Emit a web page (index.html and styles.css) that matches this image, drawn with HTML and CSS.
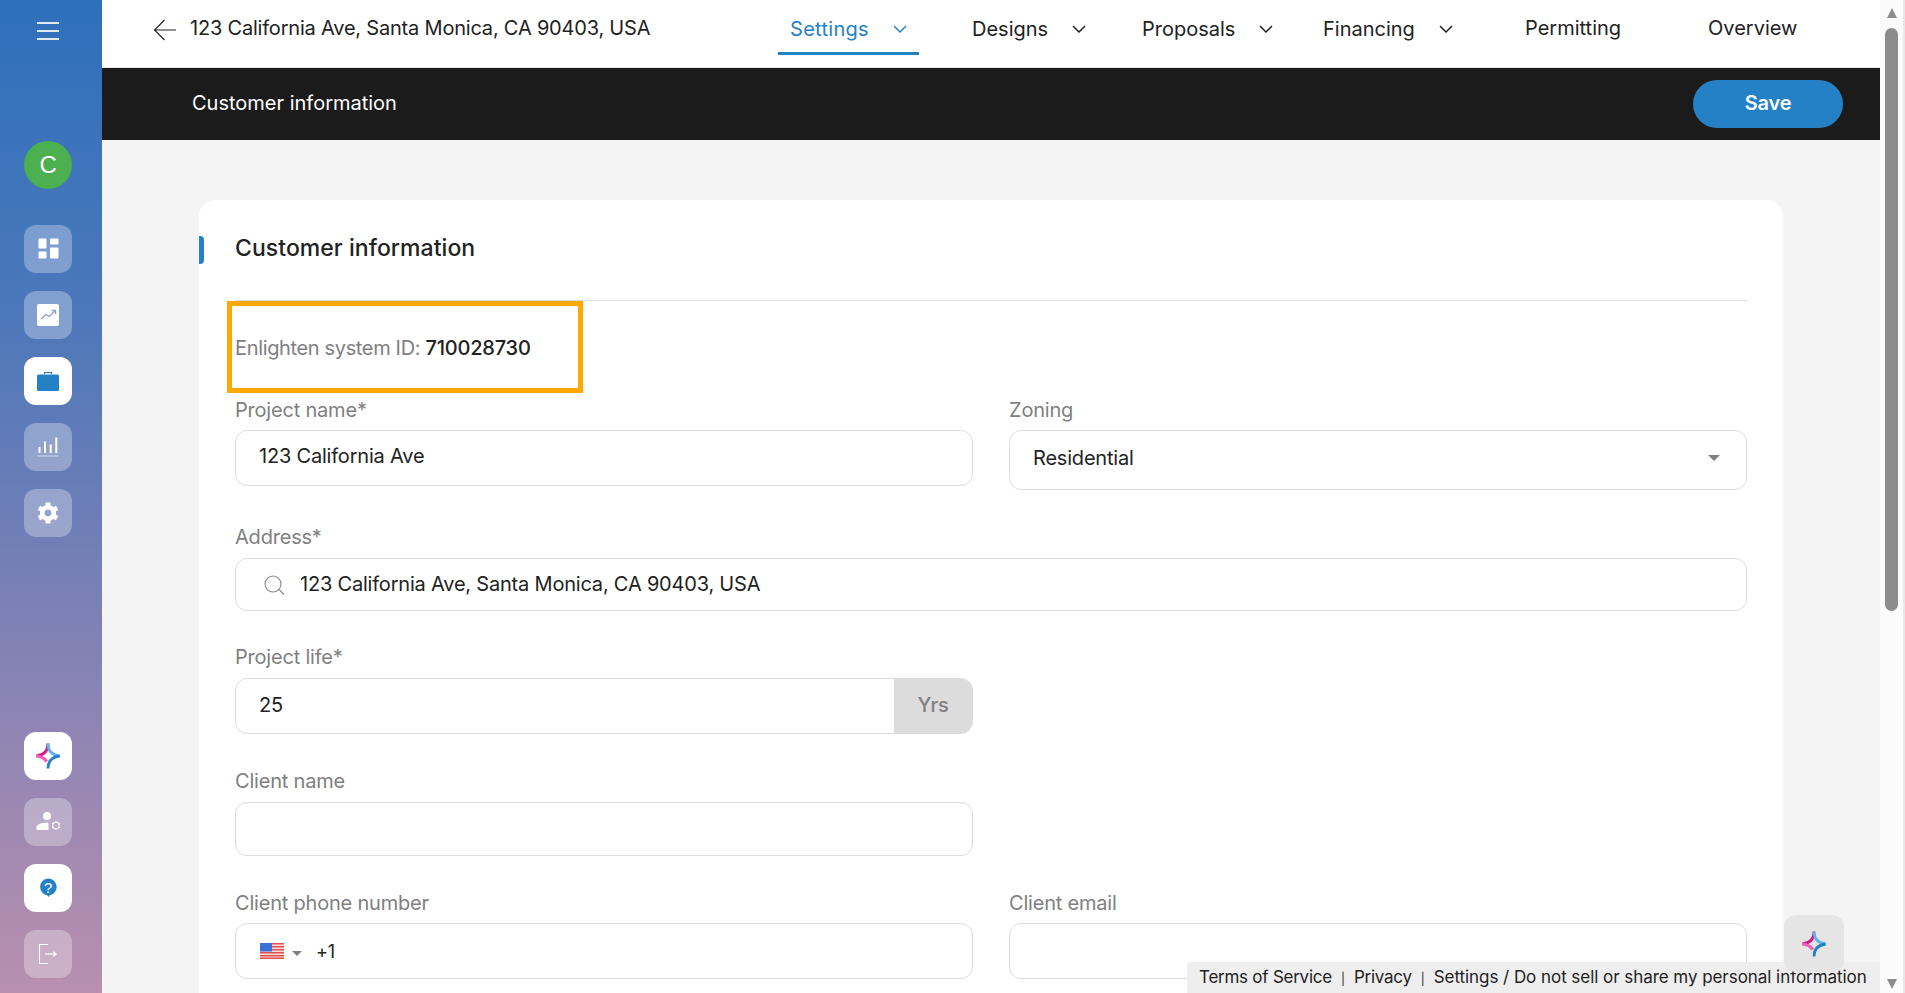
FILE: index.html
```html
<!DOCTYPE html>
<html lang="en">
<head>
    <meta charset="UTF-8">
    <meta name="viewport" content="width=device-width, initial-scale=1.0">
    <title>Customer information</title>
    <link rel="stylesheet" href="styles.css">
</head>
<body>
    <svg class="defs" width="0" height="0">
        <symbol id="spark" viewBox="0 0 28 30">
            <path d="M14 1.5 C14 9 10 14 1.5 15" fill="none" stroke="#d01c8b" stroke-width="3"/>
            <path d="M14 1.5 C14 9 18 14 26.5 15" fill="none" stroke="#5fb4ee" stroke-width="3"/>
            <path d="M1.5 15 C7 15.5 10.5 17.5 12.5 21" fill="none" stroke="#f65cb6" stroke-width="3.5"/>
            <path d="M26.5 15 C18 16 14 21 14 28.5" fill="none" stroke="#2481c6" stroke-width="3"/>
        </symbol>
    </svg>

    <div class="app">
        <!-- Sidebar -->
        <aside class="sidebar">
            <div class="menu-btn"><span></span><span></span><span></span></div>
            <div class="avatar">C</div>

            <div class="tile">
                <svg viewBox="0 0 48 48"><g fill="#fff"><rect x="14.5" y="13.5" width="8" height="10" rx="1"/><rect x="26" y="13.5" width="8.5" height="6" rx="1"/><rect x="14.5" y="26.5" width="8" height="7" rx="1"/><rect x="26" y="22.5" width="8.5" height="11" rx="1"/></g></svg>
            </div>
            <div class="tile">
                <svg viewBox="0 0 48 48"><rect x="13" y="13" width="22" height="22" rx="2" fill="#fff"/><path d="M17 28 L22 23.5 L25 25.5 L31 20 M27.5 19.5 H31.5 V23" fill="none" stroke="#8fa3d0" stroke-width="1.3"/></svg>
            </div>
            <div class="tile active">
                <svg viewBox="0 0 48 48"><path d="M20.5 17 V15.5 H27.5 V17" fill="none" stroke="#2481c6" stroke-width="1.2"/><rect x="13" y="17.5" width="22" height="16.5" rx="1.5" fill="#2481c6"/></svg>
            </div>
            <div class="tile">
                <svg viewBox="0 0 48 48"><g fill="#fff"><rect x="14.5" y="24" width="2" height="6"/><rect x="20" y="18.5" width="2" height="11.5"/><rect x="25.7" y="21.5" width="2" height="8.5"/><rect x="31.3" y="14.5" width="2" height="15.5"/></g><rect x="13.5" y="32.5" width="21" height="1" fill="#fff" opacity="0.6"/></svg>
            </div>
            <div class="tile">
                <svg viewBox="0 0 48 48"><circle cx="24" cy="24" r="5.7" fill="none" stroke="#fff" stroke-width="4.6"/><g fill="#fff"><rect x="21.5" y="13.5" width="5" height="4" rx="0.8"/><rect x="21.5" y="30.5" width="5" height="4" rx="0.8"/><rect x="21.5" y="13.5" width="5" height="4" rx="0.8" transform="rotate(60 24 24)"/><rect x="21.5" y="13.5" width="5" height="4" rx="0.8" transform="rotate(120 24 24)"/><rect x="21.5" y="13.5" width="5" height="4" rx="0.8" transform="rotate(240 24 24)"/><rect x="21.5" y="13.5" width="5" height="4" rx="0.8" transform="rotate(300 24 24)"/></g></svg>
            </div>

            <div class="sidebar-bottom">
                <div class="tile active">
                    <svg viewBox="0 0 48 48"><use href="#spark" x="11" y="10" width="26" height="28"/></svg>
                </div>
                <div class="tile">
                    <svg viewBox="0 0 48 48"><circle cx="23" cy="18" r="4" fill="#fff"/><path d="M12.5 32 V28 C15 25.5 19 24.5 24.5 24.5 V32 Z" fill="#fff"/><circle cx="32" cy="27.5" r="3.2" fill="none" stroke="#fff" stroke-width="1.1"/><path d="M32 22.8 V24.3 M32 30.7 V32.2 M27.8 25.2 L29.2 26 M34.8 29 L36.2 29.8 M27.8 29.8 L29.2 29 M34.8 26 L36.2 25.2" stroke="#fff"/></svg>
                </div>
                <div class="tile active">
                    <svg viewBox="0 0 48 48"><path d="M24 14.5 A8.5 8.5 0 0 1 25.5 31.4 L24.5 33 L23.5 31.4 A8.5 8.5 0 0 1 24 14.5 Z" fill="#2481c6"/><text x="24" y="28.5" class="help-mark">?</text></svg>
                </div>
                <div class="tile">
                    <svg viewBox="0 0 48 48"><path d="M24 14.5 H15.5 V33.5 H24" fill="none" stroke="#fff" stroke-width="1.1"/><path d="M21 24 H30" stroke="#fff" stroke-width="1.2"/><path d="M29.5 21 L33 24 L29.5 27 Z" fill="#fff"/></svg>
                </div>
            </div>
        </aside>

        <main class="main">
            <!-- Top navigation -->
            <header class="topbar">
                <div class="topbar-left">
                    <svg class="back-icon" viewBox="0 0 24 22"><path d="M23 11 H1.5 M11.5 1 L1.5 11 L11.5 21" fill="none" stroke="#222" stroke-width="1.2"/></svg>
                    <span>123 California Ave, Santa Monica, CA 90403, USA</span>
                </div>
                <nav class="nav">
                    <div class="nav-cell"><a class="nav-item current">Settings<svg class="chevron" viewBox="0 0 14 8"><path d="M1 1 L7 7 L13 1"/></svg></a></div>
                    <div class="nav-cell"><a class="nav-item">Designs<svg class="chevron" viewBox="0 0 14 8"><path d="M1 1 L7 7 L13 1"/></svg></a></div>
                    <div class="nav-cell"><a class="nav-item">Proposals<svg class="chevron" viewBox="0 0 14 8"><path d="M1 1 L7 7 L13 1"/></svg></a></div>
                    <div class="nav-cell"><a class="nav-item">Financing<svg class="chevron" viewBox="0 0 14 8"><path d="M1 1 L7 7 L13 1"/></svg></a></div>
                    <div class="nav-cell"><a class="nav-item plain">Permitting</a></div>
                    <div class="nav-cell"><a class="nav-item plain">Overview</a></div>
                </nav>
            </header>

            <div class="titlebar">
                <span>Customer information</span>
                <button class="save-btn">Save</button>
            </div>

            <!-- Form card -->
            <section class="card">
                <h2 class="card-title">Customer information</h2>

                <div class="system-id">
                    <span class="muted">Enlighten system ID:&nbsp;</span><span>710028730</span>
                </div>

                <div class="row after-zoning">
                    <div class="field">
                        <label>Project name*</label>
                        <input class="input input-name" type="text" value="123 California Ave">
                    </div>
                    <div class="field">
                        <label>Zoning</label>
                        <div class="input select">Residential<span class="caret"></span></div>
                    </div>
                </div>

                <div class="row">
                    <div class="field wide">
                        <label>Address*</label>
                        <div class="input address">
                            <svg class="search-icon" viewBox="0 0 23 20"><circle cx="10" cy="9" r="8" fill="none" stroke="#888" stroke-width="1.1"/><path d="M16 14.5 L21 19.5" stroke="#888" stroke-width="1.1"/></svg>
                            123 California Ave, Santa Monica, CA 90403, USA
                        </div>
                    </div>
                </div>

                <div class="row after-life">
                    <div class="field">
                        <label>Project life*</label>
                        <div class="input life">
                            <span class="life-value">25</span>
                            <span class="unit">Yrs</span>
                        </div>
                    </div>
                </div>

                <div class="row after-client">
                    <div class="field">
                        <label>Client name</label>
                        <div class="input client"></div>
                    </div>
                </div>

                <div class="row contact">
                    <div class="field">
                        <label>Client phone number</label>
                        <div class="input phone">
                            <svg class="flag" viewBox="0 0 24 16">
                                <rect width="24" height="16" fill="#f4dcdc"/>
                                <g fill="#e2504f"><rect y="0" width="24" height="1.5"/><rect y="3" width="24" height="1.5"/><rect y="6" width="24" height="1.5"/><rect y="9" width="24" height="1.5"/><rect y="12" width="24" height="1.5"/><rect y="14.5" width="24" height="1.5"/></g>
                                <rect width="12" height="8.5" fill="#3b6fd8"/>
                            </svg>
                            <span class="caret small"></span>
                            <span class="dial">+1</span>
                        </div>
                    </div>
                    <div class="field">
                        <label>Client email</label>
                        <div class="input phone"></div>
                    </div>
                </div>
            </section>

            <div class="legal">
                <span class="legal-short">Terms of Service</span><i>|</i><span class="legal-short">Privacy</span><i>|</i><span>Settings / Do not sell or share my personal information</span>
            </div>
            <div class="assist-btn">
                <svg viewBox="0 0 28 30"><use href="#spark"/></svg>
            </div>
        </main>

        <!-- Page scrollbar -->
        <div class="scrollbar">
            <span class="arrow up"></span>
            <div class="thumb"></div>
            <span class="arrow down"></span>
        </div>
    </div>
</body>
</html>
```

FILE: styles.css
```css
* {
    box-sizing: border-box;
}

body {
    margin: 0;
    padding: 0;
    font-family: Inter, "Noto Sans", sans-serif;
    font-size: 20px;
    letter-spacing: -0.2px;
    color: #222;
    background-color: #f4f4f4;
}

.defs {
    position: absolute;
}

.app {
    display: flex;
    height: 993px;
    overflow: hidden;
}

/* Sidebar */
.sidebar {
    display: flex;
    flex-direction: column;
    align-items: center;
    width: 102px;
    flex-shrink: 0;
    padding-right: 6px;
    padding-bottom: 15px;
    background: linear-gradient(180deg, #2e70bb 0%, #4a77ba 30%, #7a80b6 60%, #b98fae 100%);
}

.menu-btn {
    display: flex;
    flex-direction: column;
    gap: 6px;
    width: 22px;
    margin-top: 22px;
}

.menu-btn span {
    height: 2px;
    background-color: #dfe8f5;
}

.avatar {
    display: flex;
    align-items: center;
    justify-content: center;
    width: 48px;
    height: 48px;
    margin-top: 101px;
    margin-bottom: 36px;
    border-radius: 50%;
    background-color: #4caf50;
    color: #fff;
    font-family: "Liberation Sans", sans-serif;
    font-size: 24px;
}

.tile {
    width: 48px;
    height: 48px;
    margin-bottom: 18px;
    border-radius: 12px;
    background-color: rgba(255, 255, 255, 0.3);
}

.tile svg {
    display: block;
    width: 48px;
    height: 48px;
}

.tile.active {
    background-color: #fff;
}

.sidebar-bottom {
    margin-top: auto;
}

.sidebar-bottom .tile:last-child {
    margin-bottom: 0;
}

.help-mark {
    fill: #fff;
    font-family: "Liberation Sans", sans-serif;
    font-size: 15px;
    text-anchor: middle;
}

/* Main column */
.main {
    position: relative;
    flex: 1;
    min-width: 0;
    overflow: hidden;
}

.topbar {
    display: flex;
    height: 68px;
    background-color: #fff;
    border-bottom: 1px solid #e6e6e6;
}

.topbar-left {
    display: flex;
    align-items: center;
    flex: 1;
    height: 56px;
    padding-left: 51px;
}

.back-icon {
    width: 24px;
    height: 22px;
    margin-top: 4px;
    margin-right: 13px;
}

.nav {
    display: grid;
    grid-template-columns: 182px 170px 181px 202px 183px 184px;
    width: 1102px;
    flex-shrink: 0;
    letter-spacing: 0;
}

.nav-cell {
    display: flex;
}

.nav-item {
    display: flex;
    align-items: center;
    height: 55px;
    padding: 3px 12px 0;
}

.nav-item.plain {
    padding-top: 1px;
}

.nav-item.current {
    padding-top: 6px;
    color: #2481c6;
    letter-spacing: 0.3px;
    border-bottom: 3px solid #2481c6;
}

.chevron {
    width: 14px;
    height: 8px;
    margin-left: 24px;
    fill: none;
    stroke: currentColor;
    stroke-width: 1.5;
}

.titlebar {
    display: flex;
    align-items: center;
    justify-content: space-between;
    height: 72px;
    padding: 0 37px 0 90px;
    background-color: #1b1b1b;
    color: #fff;
    letter-spacing: 0;
}

.titlebar span {
    padding-bottom: 2px;
}

.save-btn {
    width: 150px;
    height: 48px;
    padding-bottom: 3px;
    border: none;
    border-radius: 24px;
    background-color: #2481c6;
    color: #fff;
    font-family: inherit;
    font-size: 20px;
    font-weight: 600;
    letter-spacing: -0.2px;
}

/* Form card */
.card {
    position: relative;
    width: 1584px;
    margin: 60px 0 0 97px;
    padding: 0 36px 40px 36px;
    border-radius: 16px;
    background-color: #fff;
}

.card::before {
    content: "";
    position: absolute;
    left: 0;
    top: 36px;
    width: 5px;
    height: 28px;
    border-radius: 0 4px 4px 0;
    background-color: #2481c6;
}

.card-title {
    margin: 0;
    padding: 36px 0 40px;
    border-bottom: 1px solid #ddd;
    font-size: 23px;
    font-weight: 500;
    letter-spacing: 0.05px;
    line-height: 24px;
}

.system-id {
    display: flex;
    align-items: center;
    width: 356px;
    height: 92px;
    margin-left: -8px;
    margin-bottom: 6px;
    padding-top: 1px;
    padding-left: 3px;
    border: 5px solid #ffa800;
    font-weight: 500;
}

.muted {
    color: #808080;
    font-weight: 400;
    letter-spacing: -0.35px;
}

.row {
    display: grid;
    grid-template-columns: 738px 738px;
    column-gap: 36px;
    margin-bottom: 35px;
}

.row.after-zoning {
    margin-bottom: 36px;
}

.row.after-zoning label {
    margin-bottom: 9px;
}

.row.after-life {
    margin-bottom: 36px;
}

.row.after-client {
    margin-bottom: 36px;
}

.field.wide {
    grid-column: 1 / 3;
}

.field label {
    display: block;
    margin-bottom: 10px;
    color: #808080;
    line-height: 22px;
}

.row.contact .field label {
    margin-bottom: 9px;
}

.input {
    display: flex;
    align-items: center;
    width: 100%;
    padding: 0 23px;
    border: 1px solid #dcdcdc;
    border-radius: 12px;
    background-color: #fff;
    color: #222;
    font-family: inherit;
    font-size: 20px;
    letter-spacing: -0.2px;
    outline: none;
}

.input-name {
    height: 56px;
    padding-bottom: 4px;
}

.select {
    height: 60px;
    padding-bottom: 4px;
}

.caret {
    width: 0;
    height: 0;
    margin-left: auto;
    margin-right: 3px;
    border-left: 6px solid transparent;
    border-right: 6px solid transparent;
    border-top: 6px solid #808080;
}

.caret.small {
    margin: 5px 0 0 8px;
    border-left-width: 5px;
    border-right-width: 5px;
    border-top-width: 5px;
}

.address {
    height: 53px;
    padding-bottom: 2px;
}

.search-icon {
    width: 23px;
    height: 20px;
    margin-top: 2px;
    margin-left: 4px;
    margin-right: 14px;
}

.life {
    height: 56px;
    padding: 0;
    overflow: hidden;
}

.life-value {
    flex: 1;
    padding-left: 23px;
    padding-bottom: 3px;
}

.unit {
    display: flex;
    align-items: center;
    justify-content: center;
    width: 78px;
    height: 100%;
    padding-bottom: 3px;
    background-color: #dcdcdc;
    color: #808080;
    font-weight: 500;
}

.client {
    height: 54px;
}

.phone {
    height: 56px;
}

.flag {
    width: 24px;
    height: 16px;
    margin-left: 1px;
}

.dial {
    margin-left: 14px;
    font-size: 18px;
}

/* Footer strip and floating button */
.legal {
    position: absolute;
    right: 0;
    bottom: 0;
    display: flex;
    align-items: center;
    width: 693px;
    height: 31px;
    padding-left: 12px;
    padding-bottom: 2px;
    border-radius: 4px 0 0 0;
    background-color: #eee;
    font-size: 17px;
    letter-spacing: -0.05px;
    white-space: nowrap;
}

.legal-short {
    letter-spacing: -0.25px;
}

.legal i {
    margin: 3px 9px 0;
    font-size: 12px;
    font-style: normal;
}

.assist-btn {
    position: absolute;
    right: 36px;
    bottom: 21px;
    display: flex;
    align-items: center;
    justify-content: center;
    width: 60px;
    height: 57px;
    border-radius: 12px;
    background-color: #e5e5e5;
}

.assist-btn svg {
    width: 26px;
    height: 28px;
}

/* Scrollbar */
.scrollbar {
    position: relative;
    display: flex;
    flex-direction: column;
    align-items: center;
    width: 25px;
    flex-shrink: 0;
    background-color: #fbfbfb;
    border-right: 2px solid #e8e8e8;
}

.thumb {
    width: 13px;
    height: 583px;
    margin-top: 10px;
    border-radius: 7px;
    background-color: #8c8c8c;
}

.arrow {
    width: 0;
    height: 0;
    border-left: 5px solid transparent;
    border-right: 5px solid transparent;
}

.arrow.up {
    margin-top: 8px;
    border-bottom: 10px solid #8c8c8c;
}

.arrow.down {
    margin-top: auto;
    margin-bottom: 4px;
    border-top: 10px solid #8c8c8c;
}
```
